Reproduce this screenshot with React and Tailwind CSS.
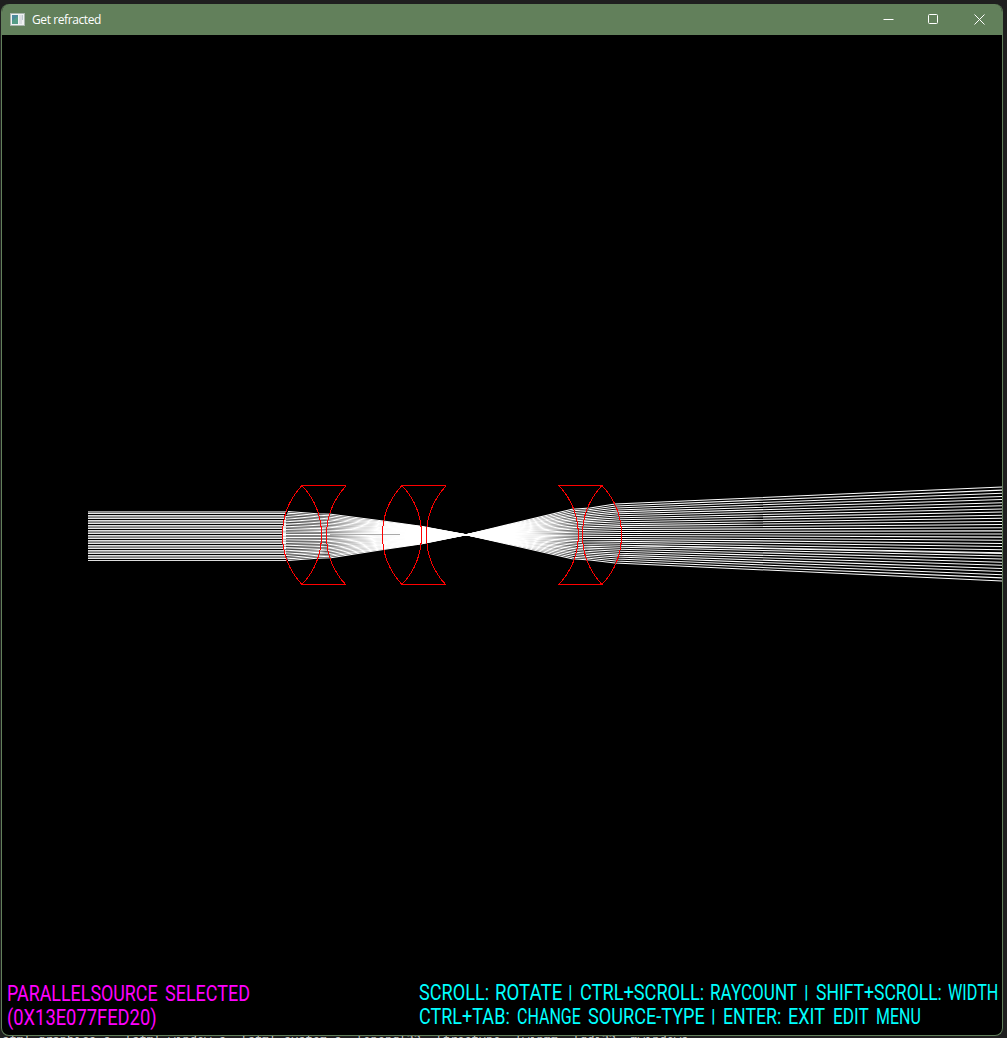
import { useLayoutEffect, useRef, useState } from "react";

const RAY_COUNT = 31;

// Each station: x on the axis, curvature of the surface, and the beam's upper and lower edge.
const STATIONS = [
  [282, 6, 511.5, 560.5],
  [322, -5, 513.8, 558.3],
  [326, 5, 514.3, 557.8],
  [382, 3, 521.3, 549.3],
  [422, -1, 526.3, 544],
  [466, 0, 534.7, 534.7],
  [578, -6, 509.2, 558.8],
  [582, 8, 508, 560],
  [622, -7, 504, 563],
  [1002, 0, 487, 581],
];

const RAYS = Array.from({ length: RAY_COUNT }, (_, i) => {
  const t = i / (RAY_COUNT - 1);
  const s = 2 * t - 1;
  return STATIONS.map(
    ([x, k, top, bottom]) => `${(x + k * s * s).toFixed(2)},${(top + (bottom - top) * t).toFixed(2)}`
  ).join(" ");
});

const BANDS = Array.from({ length: 50 }, (_, i) => {
  const shades = ["#969696", "#828282", "#e6e6e6", "#000000", "#dedede"];
  return { y: 511 + i, color: shades[i % 5] };
});

function Optics() {
  return (
    <svg className="block h-[1000px] w-[1000px]" viewBox="2 35 1000 1000">
      <defs>
        <linearGradient id="glow" gradientUnits="userSpaceOnUse" x1="322" y1="0" x2="578" y2="0">
          <stop offset="0" stopColor="#fff" stopOpacity="0" />
          <stop offset="0.25" stopColor="#fff" stopOpacity="0.9" />
          <stop offset="0.35" stopColor="#fff" />
          <stop offset="0.75" stopColor="#fff" />
          <stop offset="1" stopColor="#fff" stopOpacity="0" />
        </linearGradient>
      </defs>
      {BANDS.map((b) => (
        <rect key={b.y} x="88" y={b.y} width="198" height="1" fill={b.color} />
      ))}
      <path d="M326 514.3L382 521.3L422 526.3L466 534.3L578 509.2V558.8L466 535.3L422 544L382 549.3L326 557.8z" fill="url(#glow)" />
      <g fill="none" stroke="#fff" strokeWidth="1.05">
        {RAYS.map((p) => (
          <polyline key={p} points={p} />
        ))}
        <path d="M622 545.5L1002 553.5" />
      </g>
      <path d="M330 534.5H400" stroke="#aaa" strokeWidth="1" />
      <g fill="none" stroke="#f00" strokeWidth="1">
        {[0, 100].map((dx) => (
          <g key={dx} transform={`translate(${dx} 0)`}>
            <path d="M302 485.5A72.5 72.5 0 0 0 302 584.5A72.5 72.5 0 0 0 302 485.5" shapeRendering="crispEdges" />
            <path d="M346 486A72.5 72.5 0 0 0 346 585" shapeRendering="crispEdges" />
            <path d="M302 485.5H346M302 584.5H346" />
          </g>
        ))}
        <path d="M602 485.5A72.5 72.5 0 0 0 602 584.5A72.5 72.5 0 0 0 602 485.5" shapeRendering="crispEdges" />
        <path d="M558.5 485.2A72.5 72.5 0 0 1 558.5 584.8" shapeRendering="crispEdges" />
        <path d="M558 485.5H602M558 584.5H602" />
      </g>
    </svg>
  );
}

function Word({ width, gap, children }) {
  const ref = useRef(null);
  const [scale, setScale] = useState(1);
  useLayoutEffect(() => {
    setScale(width / ref.current.offsetWidth);
  }, [width]);
  return (
    <span className="block h-6 shrink-0" style={{ width, marginLeft: gap }}>
      <span
        ref={ref}
        className={`inline-block origin-left ${children === "|" ? "-translate-y-[2px] text-[19px]" : ""}`}
        style={{ transform: `scaleX(${scale})` }}
      >
        {children}
      </span>
    </span>
  );
}

function Line({ words }) {
  return (
    <div className="flex h-6 whitespace-nowrap">
      {words.map(([text, gap, width], i) => (
        <Word key={i} gap={gap} width={width}>
          {text}
        </Word>
      ))}
    </div>
  );
}

export default function App() {
  return (
    <div className="h-[1038px] w-[1007px] overflow-hidden bg-[#1f1f1f] pt-1 pl-px">
      <div className="h-[1032px] w-[1002px] overflow-hidden rounded-lg border border-t-0 border-[#62805b] bg-black">
        <header className="flex h-[31px] items-center bg-[#62805b] text-white">
          <svg className="ml-2 h-[13px] w-[15px] shrink-0" viewBox="0 0 15 13">
            <rect width="15" height="13" fill="#a9b5ad" />
            <rect x="1" y="1" width="13" height="11" fill="#f0f2f2" />
            <rect x="2" y="2" width="6" height="9" fill="#4d8a9c" />
            <path d="M2 11V8l6-5v8z" fill="#559d86" />
            <rect x="9" y="2" width="3" height="9" fill="#dcdfe2" />
            <rect x="12" y="2" width="1" height="5" fill="#bcc8cc" />
          </svg>
          <h1 className="ml-[7px] flex-1 font-['Open_Sans',sans-serif] text-[12px] leading-none tracking-[-0.4px]">
            Get refracted
          </h1>
          <div className="flex">
            {["min", "max", "close"].map((kind) => (
              <button key={kind} aria-label={kind} className="flex h-[31px] w-[45.5px] items-center justify-center">
                <svg className="size-[11px]" viewBox="0 0 11 11" fill="none" stroke="#fff">
                  {kind === "min" && <path d="M.5 5.5h10" />}
                  {kind === "max" && <rect x=".5" y=".5" width="9" height="9" rx="1" />}
                  {kind === "close" && <path d="M.5 .5l10 10M10.5 .5l-10 10" />}
                </svg>
              </button>
            ))}
          </div>
        </header>
        <main className="grid h-[1000px] w-[1000px] font-['Roboto',sans-serif] text-[22px] leading-6">
          <div className="col-start-1 row-start-1">
            <Optics />
          </div>
          <div className="col-start-1 row-start-1 flex items-end pb-[5px] pl-[5px]">
            <div className="w-[412px] text-[#f0f]">
              <Line words={[["PARALLELSOURCE", 0, 151], ["SELECTED", 7, 85]]} />
              <Line words={[["(0X13E077FED20)", 0, 150]]} />
            </div>
            <div className="pb-px text-[#0ff]">
              <Line
                words={[
                  ["SCROLL:", 0, 70],
                  ["ROTATE", 6, 67],
                  ["|", 6, 5],
                  ["CTRL+SCROLL:", 7, 124],
                  ["RAYCOUNT", 6, 87],
                  ["|", 7, 5],
                  ["SHIFT+SCROLL:", 7, 126],
                  ["WIDTH", 6, 50],
                ]}
              />
              <Line
                words={[
                  ["CTRL+TAB:", 0, 91],
                  ["CHANGE", 7, 64],
                  ["SOURCE-TYPE", 7, 117],
                  ["|", 6, 5],
                  ["ENTER:", 7, 58],
                  ["EXIT", 7, 37],
                  ["EDIT", 8, 36],
                  ["MENU", 7, 45],
                ]}
              />
            </div>
          </div>
        </main>
      </div>
      <div className="h-[2px] overflow-hidden pl-px font-['DejaVu_Sans_Mono',monospace] text-[12px] leading-[12px] whitespace-pre text-[#c4c4c4]">
        <div className="-mt-[2px]">sfml-graphics-s -lsfml-window-s -lsfml-system-s -lopengl32 -lfreetype -lwinmm -lgdi32 -mwindows</div>
      </div>
    </div>
  );
}
